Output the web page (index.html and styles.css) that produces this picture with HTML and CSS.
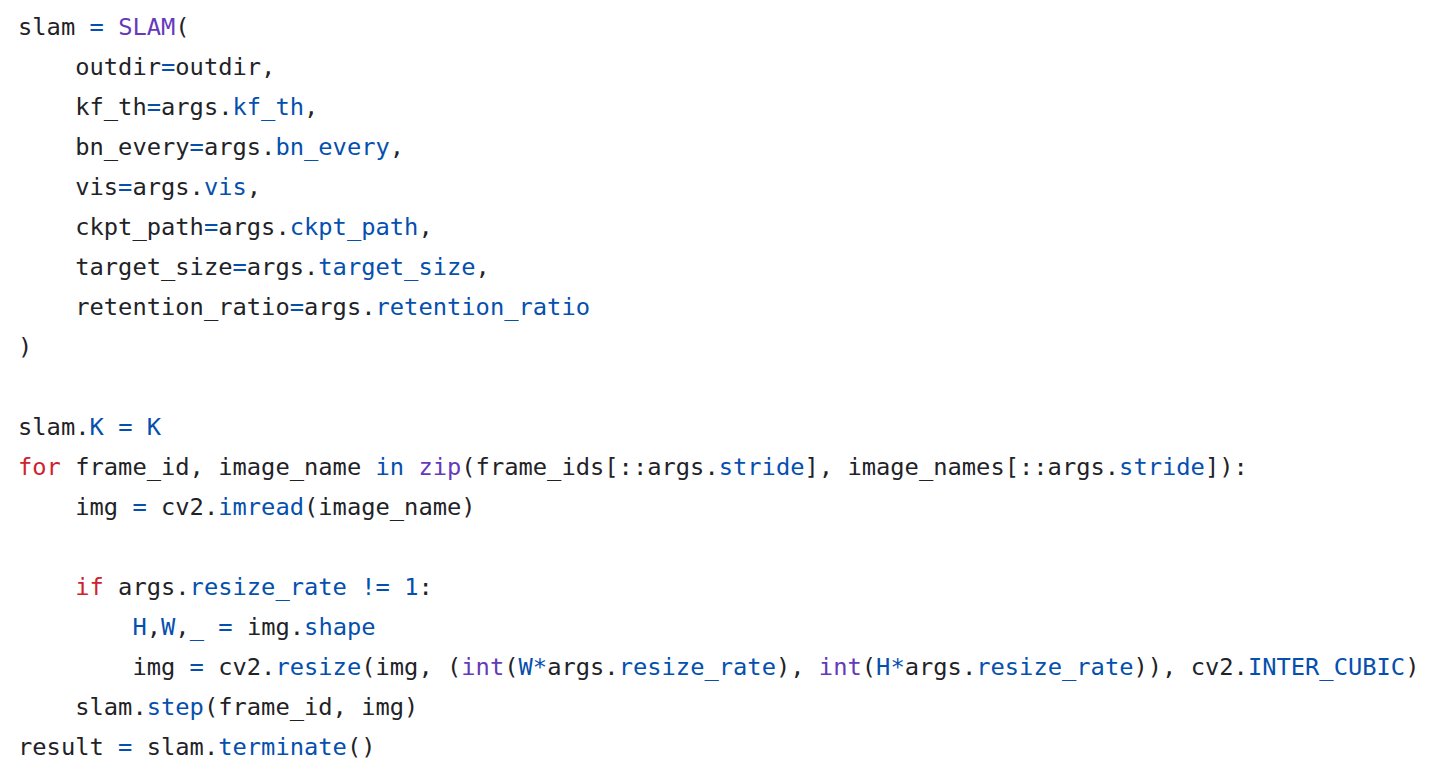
FILE: index.html
```html
<!DOCTYPE html>
<html>
<head>
<meta charset="utf-8">
<link rel="stylesheet" href="styles.css">
</head>
<body>
<pre class="code"><code>slam <span class="o">=</span> <span class="f">SLAM</span>(
    outdir<span class="o">=</span>outdir,
    kf_th<span class="o">=</span>args.<span class="a">kf_th</span>,
    bn_every<span class="o">=</span>args.<span class="a">bn_every</span>,
    vis<span class="o">=</span>args.<span class="a">vis</span>,
    ckpt_path<span class="o">=</span>args.<span class="a">ckpt_path</span>,
    target_size<span class="o">=</span>args.<span class="a">target_size</span>,
    retention_ratio<span class="o">=</span>args.<span class="a">retention_ratio</span>
)

slam.<span class="a">K</span> <span class="o">=</span> <span class="a">K</span>
<span class="k">for</span> frame_id, image_name <span class="o">in</span> <span class="f">zip</span>(frame_ids[::args.<span class="a">stride</span>], image_names[::args.<span class="a">stride</span>]):
    img <span class="o">=</span> cv2.<span class="a">imread</span>(image_name)

    <span class="k">if</span> args.<span class="a">resize_rate</span> <span class="o">!=</span> <span class="a">1</span>:
        <span class="a">H</span>,<span class="a">W</span>,<span class="a">_</span> <span class="o">=</span> img.<span class="a">shape</span>
        img <span class="o">=</span> cv2.<span class="a">resize</span>(img, (<span class="f">int</span>(<span class="a">W</span><span class="o">*</span>args.<span class="a">resize_rate</span>), <span class="f">int</span>(<span class="a">H</span><span class="o">*</span>args.<span class="a">resize_rate</span>)), cv2.<span class="a">INTER_CUBIC</span>)
    slam.<span class="a">step</span>(frame_id, img)
result <span class="o">=</span> slam.<span class="a">terminate</span>()</code></pre>
</body>
</html>
```
FILE: styles.css
```css
html, body {
  margin: 0;
  padding: 0;
  background: #ffffff;
}
.code {
  margin: 0;
  padding: 7px 0 0 18px;
  font-family: "DejaVu Sans Mono", "Liberation Mono", monospace;
  font-size: 23.75px;
  line-height: 40px;
  color: #1f2328;
  white-space: pre;
}
.code code {
  font-family: inherit;
}
.o { color: #0550ae; }
.a { color: #0550ae; }
.f { color: #6639ba; }
.k { color: #cf222e; }
```
